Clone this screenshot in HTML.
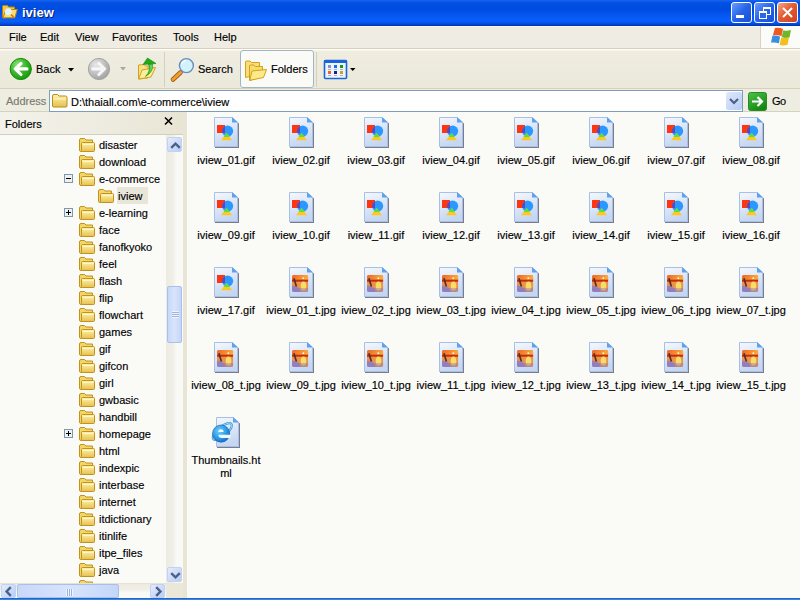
<!DOCTYPE html>
<html><head><meta charset="utf-8">
<style>
*{margin:0;padding:0;box-sizing:border-box}
html,body{width:800px;height:600px;overflow:hidden;background:#fafaf7;font-family:"Liberation Sans",sans-serif;font-size:11px;color:#000;-webkit-text-stroke:0.15px #000}
.a{position:absolute}
.ic{position:absolute;overflow:visible}
#title{left:0;top:0;width:800px;height:26px;background:linear-gradient(#1a64f0 0,#0050e4 3px,#004ce0 10px,#0658f4 16px,#0a5efa 21px,#0050e4 23.5px,#0034b0 26px)}
#title .t{left:22px;top:5px;color:#fff;font-weight:bold;font-size:13px;text-shadow:1px 1px 0 #0a1e6e;-webkit-text-stroke:0}
.wb{top:2px;width:21px;height:21px;border:1px solid #fff;border-radius:3px;background:linear-gradient(135deg,#6a9cff,#2663e8 50%,#1a4fd8)}
#menu{left:0;top:26px;width:800px;height:23px;background:linear-gradient(#f8f6ee 0,#f8f6ee 1px,#efede3 1px);border-bottom:1px solid #d8d0bc}
#menu span{position:absolute;top:5px}
#logo{left:760px;top:26px;width:40px;height:22px;background:#fbfbf8;border-left:1px solid #dcd0c0}
#tb{left:0;top:49px;width:800px;height:40px;background:linear-gradient(#fdfcf6 0,#fdfcf6 1px,#efede1 2px,#edebdd 50%,#ebe9da);border-bottom:1px solid #d8d0bc}
#addr{left:0;top:89px;width:800px;height:23px;background:#eeede2;border-bottom:1px solid #d6d2c0}
#abox{left:49px;top:90px;width:694px;height:22px;background:#fff;border:1px solid #7f9db9}
#left{left:0;top:112px;width:187px;height:486px;background:#fafaf7}
#fh{left:0;top:112px;width:183px;height:23px;background:linear-gradient(90deg,#f3f2ea,#eeece0 55%,#e8e5d4);border-bottom:1px solid #d2cfbf}
#right{left:187px;top:112px;width:613px;height:486px;background:#fafaf7}
#bottom{left:0;top:598px;width:800px;height:2px;background:linear-gradient(#2a62c6 50%,#3289ea 50%)}
#treeclip{left:0;top:135px;width:166px;height:448px;overflow:hidden}
#treeclip .tn{position:absolute;white-space:pre}
.sel{position:absolute;width:31px;height:17px;background:#e8e6d8}
#grid{left:187px;top:112px;width:613px;height:485px;overflow:hidden}
.lbl{position:absolute;width:80px;text-align:center;white-space:pre;line-height:13px}
#vscroll{left:166px;top:135px;width:17px;height:448px;background:linear-gradient(90deg,#edebe1,#f0efe7 40%,#f9f9f5 60%,#f9f9f5)}
#hscroll{left:0;top:583px;width:166px;height:15px;border-top:1px solid #e6e2cf;background:linear-gradient(#edebe1,#f0efe7 40%,#f9f9f5 60%,#f9f9f5)}
.sbtn{width:15px;height:15px;border:1px solid #c2d2f4;border-radius:2px;background:linear-gradient(135deg,#e4ecfd,#b9cdf6)}
.sthumb{border:1px solid #a8c0ee;border-radius:2px;background:linear-gradient(90deg,#c8d8fa,#d8e4fc 50%,#c4d6f8)}
.grip{width:7px;height:7px;background:repeating-linear-gradient(#f0f4ff 0,#f0f4ff 1px,#9ab4e4 1px,#9ab4e4 2px)}
.gripv{width:7px;height:7px;background:repeating-linear-gradient(90deg,#f0f4ff 0,#f0f4ff 1px,#9ab4e4 1px,#9ab4e4 2px)}
#corner{left:166px;top:583px;width:17px;height:15px;background:#ebe8da}
#split{left:183px;top:112px;width:4px;height:486px;background:#e8e5d5}

</style></head><body>
<svg width="0" height="0" style="position:absolute"><defs>
<linearGradient id="pg" x1="0" y1="0" x2="0.3" y2="1"><stop offset="0" stop-color="#f6f9fe"/><stop offset="1" stop-color="#c4d6f2"/></linearGradient>
<linearGradient id="fy" x1="0" y1="0" x2="0" y2="1"><stop offset="0" stop-color="#fff3b0"/><stop offset="1" stop-color="#e6c04c"/></linearGradient>
<linearGradient id="gr" x1="0" y1="0" x2="0" y2="1"><stop offset="0" stop-color="#7ade6a"/><stop offset="1" stop-color="#16980c"/></linearGradient>
<linearGradient id="gy" x1="0" y1="0" x2="0" y2="1"><stop offset="0" stop-color="#e4e4e4"/><stop offset="1" stop-color="#a8a8a8"/></linearGradient>
<linearGradient id="sb" x1="0" y1="0" x2="1" y2="1"><stop offset="0" stop-color="#dfe9fd"/><stop offset="1" stop-color="#b9cdf6"/></linearGradient>
</defs>
<symbol id="page" viewBox="0 0 26 33">
 <path d="M1 1H19L25 6.5V31H1Z" fill="#7a7c8c"/>
 <path d="M0 0H18L24 5.5V30H0Z" fill="url(#pg)"/>
 <path d="M0.5 0.5H18L23.5 5.7V29.5H0.5Z" fill="none" stroke="#a9c0e6" stroke-width="1"/>
 <path d="M18 0L24 5.5H18Z" fill="#5ea2ee"/>
</symbol>
<symbol id="gif" viewBox="0 0 26 33">
 <use href="#page" width="26" height="33"/>
 <rect x="3" y="8" width="8" height="8" fill="#ff3410"/>
 <circle cx="13.6" cy="14.1" r="5.6" fill="#2b98ff"/>
 <path d="M11 16V9.2A5.6 5.6 0 0 0 8 14.1A5.6 5.6 0 0 0 8.4 16Z" fill="#5a4ab8"/>
 <path d="M12.7 16L7 23.2H18Z" fill="#ffc81c"/>
 <path d="M12.7 16L9.6 19.9H15.8Z" fill="#56e040"/>
</symbol>
<symbol id="jpg" viewBox="0 0 26 33">
 <use href="#page" width="26" height="33"/>
 <defs>
  <linearGradient id="sky" x1="0" y1="0" x2="1" y2="0.2"><stop offset="0" stop-color="#ec6426"/><stop offset="1" stop-color="#f8aa3c"/></linearGradient>
  <linearGradient id="pur" x1="0" y1="0" x2="0" y2="1"><stop offset="0" stop-color="#9c84c0" stop-opacity="0"/><stop offset="0.5" stop-color="#8c7cc8"/><stop offset="1" stop-color="#7c78d0"/></linearGradient>
  <clipPath id="jc"><rect x="3" y="8" width="16.3" height="17" rx="2"/></clipPath>
 </defs>
 <g clip-path="url(#jc)">
  <rect x="3" y="8" width="16.3" height="17" fill="#e8944a"/>
  <rect x="3" y="8" width="16.3" height="5" fill="url(#sky)"/>
  <rect x="3" y="12.7" width="16.3" height="2" fill="#c82a0c"/>
  <ellipse cx="14.5" cy="19" rx="2.8" ry="4.5" fill="#f8dc68"/>
  <rect x="3" y="21" width="16.3" height="4" fill="#8c7cc8" opacity="0.45"/>
  <path d="M3 18.5Q7.5 19 10.5 21.5L11.5 25H3Z" fill="#8c7cc8" opacity="0.85"/>
  <circle cx="14.3" cy="11.2" r="0.9" fill="#fff8e0"/>
 </g>
 <path d="M4.9 11.2L7.4 19.4" stroke="#5a2e28" stroke-width="1.7"/>
</symbol>
<symbol id="htm" viewBox="0 0 32 33">
 <defs><radialGradient id="ieg" cx="0.4" cy="0.35" r="0.7"><stop offset="0" stop-color="#6cd0fa"/><stop offset="0.6" stop-color="#2c9ae8"/><stop offset="1" stop-color="#1468c8"/></radialGradient></defs>
 <path d="M7 1H24L30 6.5V31H7Z" fill="#7a7c8c"/>
 <path d="M6 0H23L29 5.5V30H6Z" fill="url(#pg)"/>
 <path d="M6.5 0.5H23L28.5 5.7V29.5H6.5Z" fill="none" stroke="#a9c0e6" stroke-width="1"/>
 <path d="M23 0L29 5.5H23Z" fill="#5ea2ee"/>
 <ellipse cx="12.3" cy="14.5" rx="11.8" ry="4.6" transform="rotate(-40 12.3 14.5)" fill="none" stroke="#3a9ad8" stroke-width="2.2"/>
 <ellipse cx="12.3" cy="14.5" rx="11.8" ry="4.6" transform="rotate(-40 12.3 14.5)" fill="none" stroke="#9ad8f4" stroke-width="0.9"/>
 <circle cx="11.1" cy="16.6" r="8.6" fill="url(#ieg)" stroke="#1a5aa8" stroke-width="0.6"/>
 <path d="M8.3 15.1A2.6 2.9 0 0 1 13.6 15.1Z" fill="#eefaff"/>
 <path d="M8.4 17.8H20.4V21H11.6Q8.6 21 8.4 17.8Z" fill="#eefaff"/>
</symbol>
<symbol id="fold" viewBox="0 0 16 17">
 <path d="M0.5 3Q0.5 1.5 2 1.5H5.5L7 3H13.5V13.5L2 14.5Q0.5 14.5 0.5 13Z" fill="#f2d666" stroke="#c2921e" stroke-width="1"/>
 <rect x="2.5" y="5.5" width="13" height="9" rx="1" fill="url(#fy)" stroke="#c2921e" stroke-width="1"/>
 <path d="M3.5 7.5H14.5" stroke="#fff6c8" stroke-width="1"/>
</symbol>
<symbol id="boxm" viewBox="0 0 9 9">
 <rect x="0.5" y="0.5" width="8" height="8" fill="#f0f0ee" stroke="#7a98af"/>
 <path d="M2 4.5H7" stroke="#000"/>
</symbol>
<symbol id="boxp" viewBox="0 0 9 9">
 <rect x="0.5" y="0.5" width="8" height="8" fill="#f0f0ee" stroke="#7a98af"/>
 <path d="M2 4.5H7M4.5 2V7" stroke="#000"/>
</symbol>
</svg>
<div id="title" class="a">
  <svg class="ic" style="left:0px;top:2px" width="20" height="20" viewBox="0 2 20 20">
    <path d="M2.5 17.5V6.5Q2.5 5.5 3.5 5.5H7.5L8.5 7H14.5V16.5L3.5 18Z" fill="#f0c84a" stroke="#b8860e" stroke-width="1"/>
    <path d="M3 17.8L6 9.5H17.3L14.8 17.8Z" fill="#f8e070" stroke="#b8860e" stroke-width="1"/>
    <circle cx="8.3" cy="11.7" r="3.4" fill="#dff4ff"/>
    <path d="M11 14.5L13.5 17" stroke="#d86a28" stroke-width="1.4"/>
  </svg>
  <div class="a t">iview</div>
  <div class="a wb" style="left:731px"><div class="a" style="left:4px;top:12px;width:8px;height:3px;background:#fff"></div></div>
  <div class="a wb" style="left:754px">
    <div class="a" style="left:8px;top:4px;width:8px;height:8px;border:1px solid #fff;border-top-width:2px"></div>
    <div class="a" style="left:4px;top:8px;width:8px;height:8px;border:1px solid #fff;border-top-width:2px;background:#2a66e6"></div>
  </div>
  <div class="a wb" style="left:777px;background:linear-gradient(135deg,#f4a888,#e45c32 45%,#cc431e)">
    <svg class="ic" style="left:4px;top:4px" width="11" height="11" viewBox="0 0 11 11"><path d="M1 1L10 10M10 1L1 10" stroke="#fff" stroke-width="2"/></svg>
  </div>
</div>
<div id="menu" class="a">
  <span style="left:9px">File</span>
  <span style="left:40px">Edit</span>
  <span style="left:75px">View</span>
  <span style="left:112px">Favorites</span>
  <span style="left:173px">Tools</span>
  <span style="left:214px">Help</span>
</div>
<div id="logo" class="a">
  <svg class="ic" style="left:-2px;top:-1px" width="41" height="24" viewBox="759 25 41 24">
    <path d="M775 28Q779 27 783 29L781.5 36Q777.5 34.5 773 35Z" fill="#f0581e"/>
    <path d="M783.3 30.2Q787 31.5 791 30L789.5 37.5Q785.5 38.5 781.7 37Z" fill="#6cb82a"/>
    <path d="M772.5 35.5Q776.5 35 780 36.6L779 43.2Q775 42 771 42.6Z" fill="#3a8ee0"/>
    <path d="M781.2 37.6Q785 38.6 789 37.2L787.5 44.8Q783.5 46 779.6 45Z" fill="#f2c01c"/>
  </svg>
</div>
<div id="tb" class="a">
    <svg class="ic" style="left:6px;top:5px" width="30" height="30" viewBox="6 54 30 30">
    <defs><radialGradient id="gb" cx="0.35" cy="0.3" r="0.75"><stop offset="0" stop-color="#8ae27a"/><stop offset="0.55" stop-color="#3cb42c"/><stop offset="1" stop-color="#149a0a"/></radialGradient></defs>
    <circle cx="20.75" cy="69" r="10.6" fill="url(#gb)" stroke="#0c8a06" stroke-width="1"/>
    <path d="M21 63.5L15.2 68.9L21 74.5M15.5 68.9H27" stroke="#fff" stroke-width="3.1" stroke-linecap="round" stroke-linejoin="round" fill="none"/>
  </svg>
  <span class="a" style="left:36px;top:14px">Back</span>
  <svg class="ic" style="left:68px;top:19px" width="6" height="4"><path d="M0 0H6L3 3.5Z" fill="#000"/></svg>
  <svg class="ic" style="left:84px;top:5px" width="30" height="30" viewBox="84 54 30 30">
    <defs><radialGradient id="gf" cx="0.35" cy="0.3" r="0.75"><stop offset="0" stop-color="#e8e8e8"/><stop offset="0.6" stop-color="#bdbdbd"/><stop offset="1" stop-color="#a0a0a0"/></radialGradient></defs>
    <circle cx="99" cy="69" r="10.6" fill="url(#gf)" stroke="#a4a4a4" stroke-width="1"/>
    <path d="M98.8 63.5L104.6 68.9L98.8 74.5M104.3 68.9H92.8" stroke="#f6f6f6" stroke-width="3.1" stroke-linecap="round" stroke-linejoin="round" fill="none"/>
  </svg>
  <svg class="ic" style="left:120px;top:18px" width="6" height="4"><path d="M0 0H6L3 3.5Z" fill="#a8a8a0"/></svg>
  <svg class="ic" style="left:134px;top:5px" width="28" height="30" viewBox="134 54 28 30">
    <defs><linearGradient id="ag" x1="0" y1="0" x2="1" y2="0"><stop offset="0" stop-color="#16a010"/><stop offset="1" stop-color="#80e070"/></linearGradient></defs>
    <path d="M138.5 65L144 64.5L145.5 66H148V78L138.5 79Z" fill="#f4e288" stroke="#d6a020" stroke-width="1"/>
    <path d="M138.7 79L142 70L155.5 67.5L151 77Z" fill="#faee9e" stroke="#d6a020" stroke-width="1"/>
    <path d="M145.5 76.5Q151 71 148.5 64L152.5 64Q154 71.5 145.5 76.5Z" fill="url(#ag)" stroke="#108a08" stroke-width="0.6"/>
    <path d="M143 64.5L147.5 58L156 63.5Z" fill="#22a818" stroke="#108a08" stroke-width="0.6"/>
  </svg>
  <div class="a" style="left:164px;top:3px;width:1px;height:35px;background:#d4d0bf"></div>
  <svg class="ic" style="left:166px;top:54px;top:5px" width="34" height="30" viewBox="166 54 34 30">
    <path d="M180.5 72.5L173 79.5" stroke="#a05818" stroke-width="4.6" stroke-linecap="round"/>
    <path d="M180.5 72.5L173 79.5" stroke="#f0a030" stroke-width="3" stroke-linecap="round"/>
    <circle cx="186.4" cy="65.6" r="7" fill="#d2f2fc" stroke="#6a8cc0" stroke-width="1.4"/>
    <path d="M182 63.5A4.5 4.5 0 0 1 185.5 60.5" stroke="#fff" stroke-width="1.6" fill="none"/>
  </svg>
  <span class="a" style="left:198px;top:14px">Search</span>
  <div class="a" style="left:240px;top:1px;width:74px;height:38px;border:1px solid #a3b4c8;border-radius:3px;background:#fafaf7"></div>
  <svg class="ic" style="left:240px;top:5px" width="30" height="30" viewBox="240 54 30 30">
    <path d="M245.5 62Q245.5 61 246.5 61H250L251.5 62.5H259.5V74L245.5 77.5Z" fill="#f6de78" stroke="#d8a018" stroke-width="1"/>
    <path d="M249.5 66Q249.5 65 250.5 65H254L255.5 66.5H262.5V77L249.5 80.5Z" fill="#f4dc70" stroke="#d8a018" stroke-width="1"/>
    <path d="M249.8 80.3L252 71L266.5 69.5L263.5 77.5Z" fill="#faea8c" stroke="#d8a018" stroke-width="1"/>
  </svg>
  <span class="a" style="left:271px;top:14px">Folders</span>
  <div class="a" style="left:316px;top:3px;width:1px;height:35px;background:#d4d0bf"></div>
  <svg class="ic" style="left:318px;top:5px" width="42" height="30" viewBox="318 54 42 30">
    <rect x="324.5" y="60.5" width="22" height="18" rx="1" fill="#eef4fd" stroke="#1a64d8" stroke-width="1.6"/>
    <rect x="324" y="60" width="23" height="3" fill="#1a64d8"/>
    <rect x="328" y="65" width="3" height="3" fill="#8890d0"/><rect x="334" y="65" width="3" height="3" fill="#1a70e0"/><rect x="340" y="65" width="3" height="3" fill="#10a010"/>
    <rect x="328" y="71" width="3" height="3" fill="#f06030"/><rect x="334" y="71" width="3" height="3" fill="#0a2890"/><rect x="340" y="71" width="3" height="3" fill="#d0a020"/>
    <path d="M328 69.5h3M334 69.5h3M340 69.5h3M328 75.5h3M334 75.5h3M340 75.5h3" stroke="#a0a0a0" stroke-width="0.8"/>
    <path d="M350 68H355.5L352.75 71Z" fill="#000"/>
  </svg>
</div>
<div id="addr" class="a">
  <span class="a" style="left:6px;top:6px;color:#7a7a6e;-webkit-text-stroke:0.15px #7a7a6e">Address</span>
  <svg class="ic" style="left:748px;top:3px" width="19" height="19" viewBox="0 0 19 19">
    <defs><linearGradient id="gog" x1="0" y1="0" x2="0.6" y2="1"><stop offset="0" stop-color="#4ec24a"/><stop offset="1" stop-color="#12880e"/></linearGradient></defs>
    <rect x="0.5" y="0.5" width="18" height="18" rx="2" fill="url(#gog)" stroke="#2a8a2a"/>
    <path d="M4 9.5H14M9.5 5L14 9.5L9.5 14" stroke="#fff" stroke-width="2.2" fill="none"/>
  </svg>
  <span class="a" style="left:772px;top:6px;letter-spacing:-0.5px">Go</span>
</div>
<div id="abox" class="a">
  <svg class="ic" style="left:2px;top:3px" width="16" height="14" viewBox="0 0 16 14"><path d="M0.5 2Q0.5 0.5 2 0.5H5.5L7 2H13.5Q15 2 15 3.5V12Q15 13 14 13H1.5Q0.5 13 0.5 12Z" fill="url(#fy)" stroke="#b68e1a"/><path d="M1.5 5H14" stroke="#fff8d0"/></svg>
  <span class="a" style="left:21px;top:5px">D:\thaiall.com\e-commerce\iview</span>
  <div class="a" style="left:676px;top:1px;width:16px;height:18px;background:linear-gradient(135deg,#dfe8fd,#b8ccf5);border-radius:2px">
    <svg class="ic" style="left:3px;top:6px" width="10" height="7" viewBox="0 0 10 7"><path d="M1 1L5 5L9 1" stroke="#4d6185" stroke-width="2.2" fill="none"/></svg>
  </div>
</div>
<div id="left" class="a"></div>
<div id="fh" class="a"><span class="a" style="left:5px;top:6px">Folders</span>
  <svg class="ic" style="left:164px;top:5px" width="9" height="8" viewBox="0 0 9 8"><path d="M1 0.5L8 7.5M8 0.5L1 7.5" stroke="#000" stroke-width="1.6"/></svg>
</div>
<div id="vscroll" class="a">
  <div class="a sbtn" style="left:1px;top:2px"><svg class="ic" style="left:2px;top:4px" width="11" height="7" viewBox="0 0 11 7"><path d="M1.2 5.8L5.5 1.6L9.8 5.8" stroke="#4d6185" stroke-width="2.4" fill="none"/></svg></div>
  <div class="a sthumb" style="left:1px;top:151px;width:15px;height:57px"><div class="a grip" style="left:4px;top:24px"></div></div>
  <div class="a sbtn" style="left:1px;top:432px"><svg class="ic" style="left:2px;top:4px" width="11" height="7" viewBox="0 0 11 7"><path d="M1.2 1.2L5.5 5.4L9.8 1.2" stroke="#4d6185" stroke-width="2.4" fill="none"/></svg></div>
</div>
<div id="hscroll" class="a">
  <div class="a sbtn" style="left:1px;top:0px;height:14px"><svg class="ic" style="left:3px;top:1px" width="7" height="11" viewBox="0 0 7 11"><path d="M5.8 1.2L1.6 5.5L5.8 9.8" stroke="#4d6185" stroke-width="2.4" fill="none"/></svg></div>
  <div class="a sthumb" style="left:17px;top:0px;width:102px;height:14px"><div class="a gripv" style="left:48px;top:4px"></div></div>
  <div class="a sbtn" style="left:150px;top:0px;height:14px"><svg class="ic" style="left:4px;top:1px" width="7" height="11" viewBox="0 0 7 11"><path d="M1.2 1.2L5.4 5.5L1.2 9.8" stroke="#4d6185" stroke-width="2.4" fill="none"/></svg></div>
</div>
<div id="corner" class="a"></div>
<div id="split" class="a"></div>
<div id="right" class="a"></div>

<div id="treeclip" class="a"><svg class="ic" style="left:79px;top:2px" width="16" height="17"><use href="#fold" width="16" height="17"/></svg><span class="tn" style="left:99px;top:4px">disaster</span><svg class="ic" style="left:79px;top:19px" width="16" height="17"><use href="#fold" width="16" height="17"/></svg><span class="tn" style="left:99px;top:21px">download</span><svg class="ic" style="left:64px;top:39px" width="9" height="9"><use href="#boxm" width="9" height="9"/></svg><svg class="ic" style="left:79px;top:36px" width="16" height="17"><use href="#fold" width="16" height="17"/></svg><span class="tn" style="left:99px;top:38px">e-commerce</span><div class="sel" style="left:117px;top:52px"></div><svg class="ic" style="left:98px;top:53px" width="16" height="17"><use href="#fold" width="16" height="17"/></svg><span class="tn" style="left:118px;top:55px">iview</span><svg class="ic" style="left:64px;top:73px" width="9" height="9"><use href="#boxp" width="9" height="9"/></svg><svg class="ic" style="left:79px;top:70px" width="16" height="17"><use href="#fold" width="16" height="17"/></svg><span class="tn" style="left:99px;top:72px">e-learning</span><svg class="ic" style="left:79px;top:87px" width="16" height="17"><use href="#fold" width="16" height="17"/></svg><span class="tn" style="left:99px;top:89px">face</span><svg class="ic" style="left:79px;top:104px" width="16" height="17"><use href="#fold" width="16" height="17"/></svg><span class="tn" style="left:99px;top:106px">fanofkyoko</span><svg class="ic" style="left:79px;top:121px" width="16" height="17"><use href="#fold" width="16" height="17"/></svg><span class="tn" style="left:99px;top:123px">feel</span><svg class="ic" style="left:79px;top:138px" width="16" height="17"><use href="#fold" width="16" height="17"/></svg><span class="tn" style="left:99px;top:140px">flash</span><svg class="ic" style="left:79px;top:155px" width="16" height="17"><use href="#fold" width="16" height="17"/></svg><span class="tn" style="left:99px;top:157px">flip</span><svg class="ic" style="left:79px;top:172px" width="16" height="17"><use href="#fold" width="16" height="17"/></svg><span class="tn" style="left:99px;top:174px">flowchart</span><svg class="ic" style="left:79px;top:189px" width="16" height="17"><use href="#fold" width="16" height="17"/></svg><span class="tn" style="left:99px;top:191px">games</span><svg class="ic" style="left:79px;top:206px" width="16" height="17"><use href="#fold" width="16" height="17"/></svg><span class="tn" style="left:99px;top:208px">gif</span><svg class="ic" style="left:79px;top:223px" width="16" height="17"><use href="#fold" width="16" height="17"/></svg><span class="tn" style="left:99px;top:225px">gifcon</span><svg class="ic" style="left:79px;top:240px" width="16" height="17"><use href="#fold" width="16" height="17"/></svg><span class="tn" style="left:99px;top:242px">girl</span><svg class="ic" style="left:79px;top:257px" width="16" height="17"><use href="#fold" width="16" height="17"/></svg><span class="tn" style="left:99px;top:259px">gwbasic</span><svg class="ic" style="left:79px;top:274px" width="16" height="17"><use href="#fold" width="16" height="17"/></svg><span class="tn" style="left:99px;top:276px">handbill</span><svg class="ic" style="left:64px;top:294px" width="9" height="9"><use href="#boxp" width="9" height="9"/></svg><svg class="ic" style="left:79px;top:291px" width="16" height="17"><use href="#fold" width="16" height="17"/></svg><span class="tn" style="left:99px;top:293px">homepage</span><svg class="ic" style="left:79px;top:308px" width="16" height="17"><use href="#fold" width="16" height="17"/></svg><span class="tn" style="left:99px;top:310px">html</span><svg class="ic" style="left:79px;top:325px" width="16" height="17"><use href="#fold" width="16" height="17"/></svg><span class="tn" style="left:99px;top:327px">indexpic</span><svg class="ic" style="left:79px;top:342px" width="16" height="17"><use href="#fold" width="16" height="17"/></svg><span class="tn" style="left:99px;top:344px">interbase</span><svg class="ic" style="left:79px;top:359px" width="16" height="17"><use href="#fold" width="16" height="17"/></svg><span class="tn" style="left:99px;top:361px">internet</span><svg class="ic" style="left:79px;top:376px" width="16" height="17"><use href="#fold" width="16" height="17"/></svg><span class="tn" style="left:99px;top:378px">itdictionary</span><svg class="ic" style="left:79px;top:393px" width="16" height="17"><use href="#fold" width="16" height="17"/></svg><span class="tn" style="left:99px;top:395px">itinlife</span><svg class="ic" style="left:79px;top:410px" width="16" height="17"><use href="#fold" width="16" height="17"/></svg><span class="tn" style="left:99px;top:412px">itpe_files</span><svg class="ic" style="left:79px;top:427px" width="16" height="17"><use href="#fold" width="16" height="17"/></svg><span class="tn" style="left:99px;top:429px">java</span><svg class="ic" style="left:79px;top:444px" width="16" height="17"><use href="#fold" width="16" height="17"/></svg><span class="tn" style="left:99px;top:446px">jsp</span></div>
<div id="grid" class="a"><svg class="ic" style="left:27px;top:5px" width="26" height="33"><use href="#gif" width="26" height="33"/></svg><div class="lbl" style="left:-1px;top:42px">iview_01.gif</div><svg class="ic" style="left:102px;top:5px" width="26" height="33"><use href="#gif" width="26" height="33"/></svg><div class="lbl" style="left:74px;top:42px">iview_02.gif</div><svg class="ic" style="left:177px;top:5px" width="26" height="33"><use href="#gif" width="26" height="33"/></svg><div class="lbl" style="left:149px;top:42px">iview_03.gif</div><svg class="ic" style="left:252px;top:5px" width="26" height="33"><use href="#gif" width="26" height="33"/></svg><div class="lbl" style="left:224px;top:42px">iview_04.gif</div><svg class="ic" style="left:327px;top:5px" width="26" height="33"><use href="#gif" width="26" height="33"/></svg><div class="lbl" style="left:299px;top:42px">iview_05.gif</div><svg class="ic" style="left:402px;top:5px" width="26" height="33"><use href="#gif" width="26" height="33"/></svg><div class="lbl" style="left:374px;top:42px">iview_06.gif</div><svg class="ic" style="left:477px;top:5px" width="26" height="33"><use href="#gif" width="26" height="33"/></svg><div class="lbl" style="left:449px;top:42px">iview_07.gif</div><svg class="ic" style="left:552px;top:5px" width="26" height="33"><use href="#gif" width="26" height="33"/></svg><div class="lbl" style="left:524px;top:42px">iview_08.gif</div><svg class="ic" style="left:27px;top:80px" width="26" height="33"><use href="#gif" width="26" height="33"/></svg><div class="lbl" style="left:-1px;top:117px">iview_09.gif</div><svg class="ic" style="left:102px;top:80px" width="26" height="33"><use href="#gif" width="26" height="33"/></svg><div class="lbl" style="left:74px;top:117px">iview_10.gif</div><svg class="ic" style="left:177px;top:80px" width="26" height="33"><use href="#gif" width="26" height="33"/></svg><div class="lbl" style="left:149px;top:117px">iview_11.gif</div><svg class="ic" style="left:252px;top:80px" width="26" height="33"><use href="#gif" width="26" height="33"/></svg><div class="lbl" style="left:224px;top:117px">iview_12.gif</div><svg class="ic" style="left:327px;top:80px" width="26" height="33"><use href="#gif" width="26" height="33"/></svg><div class="lbl" style="left:299px;top:117px">iview_13.gif</div><svg class="ic" style="left:402px;top:80px" width="26" height="33"><use href="#gif" width="26" height="33"/></svg><div class="lbl" style="left:374px;top:117px">iview_14.gif</div><svg class="ic" style="left:477px;top:80px" width="26" height="33"><use href="#gif" width="26" height="33"/></svg><div class="lbl" style="left:449px;top:117px">iview_15.gif</div><svg class="ic" style="left:552px;top:80px" width="26" height="33"><use href="#gif" width="26" height="33"/></svg><div class="lbl" style="left:524px;top:117px">iview_16.gif</div><svg class="ic" style="left:27px;top:155px" width="26" height="33"><use href="#gif" width="26" height="33"/></svg><div class="lbl" style="left:-1px;top:192px">iview_17.gif</div><svg class="ic" style="left:102px;top:155px" width="26" height="33"><use href="#jpg" width="26" height="33"/></svg><div class="lbl" style="left:74px;top:192px">iview_01_t.jpg</div><svg class="ic" style="left:177px;top:155px" width="26" height="33"><use href="#jpg" width="26" height="33"/></svg><div class="lbl" style="left:149px;top:192px">iview_02_t.jpg</div><svg class="ic" style="left:252px;top:155px" width="26" height="33"><use href="#jpg" width="26" height="33"/></svg><div class="lbl" style="left:224px;top:192px">iview_03_t.jpg</div><svg class="ic" style="left:327px;top:155px" width="26" height="33"><use href="#jpg" width="26" height="33"/></svg><div class="lbl" style="left:299px;top:192px">iview_04_t.jpg</div><svg class="ic" style="left:402px;top:155px" width="26" height="33"><use href="#jpg" width="26" height="33"/></svg><div class="lbl" style="left:374px;top:192px">iview_05_t.jpg</div><svg class="ic" style="left:477px;top:155px" width="26" height="33"><use href="#jpg" width="26" height="33"/></svg><div class="lbl" style="left:449px;top:192px">iview_06_t.jpg</div><svg class="ic" style="left:552px;top:155px" width="26" height="33"><use href="#jpg" width="26" height="33"/></svg><div class="lbl" style="left:524px;top:192px">iview_07_t.jpg</div><svg class="ic" style="left:27px;top:230px" width="26" height="33"><use href="#jpg" width="26" height="33"/></svg><div class="lbl" style="left:-1px;top:267px">iview_08_t.jpg</div><svg class="ic" style="left:102px;top:230px" width="26" height="33"><use href="#jpg" width="26" height="33"/></svg><div class="lbl" style="left:74px;top:267px">iview_09_t.jpg</div><svg class="ic" style="left:177px;top:230px" width="26" height="33"><use href="#jpg" width="26" height="33"/></svg><div class="lbl" style="left:149px;top:267px">iview_10_t.jpg</div><svg class="ic" style="left:252px;top:230px" width="26" height="33"><use href="#jpg" width="26" height="33"/></svg><div class="lbl" style="left:224px;top:267px">iview_11_t.jpg</div><svg class="ic" style="left:327px;top:230px" width="26" height="33"><use href="#jpg" width="26" height="33"/></svg><div class="lbl" style="left:299px;top:267px">iview_12_t.jpg</div><svg class="ic" style="left:402px;top:230px" width="26" height="33"><use href="#jpg" width="26" height="33"/></svg><div class="lbl" style="left:374px;top:267px">iview_13_t.jpg</div><svg class="ic" style="left:477px;top:230px" width="26" height="33"><use href="#jpg" width="26" height="33"/></svg><div class="lbl" style="left:449px;top:267px">iview_14_t.jpg</div><svg class="ic" style="left:552px;top:230px" width="26" height="33"><use href="#jpg" width="26" height="33"/></svg><div class="lbl" style="left:524px;top:267px">iview_15_t.jpg</div><svg class="ic" style="left:23px;top:305px" width="32" height="33"><use href="#htm" width="32" height="33"/></svg><div class="lbl" style="left:-1px;top:342px">Thumbnails.ht<br>ml</div></div>
<div id="bottom" class="a"></div>
</body></html>
